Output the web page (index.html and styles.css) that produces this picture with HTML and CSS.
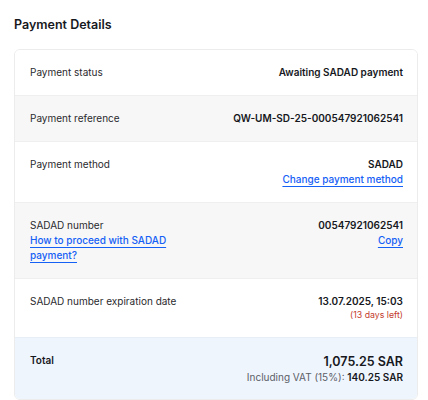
FILE: index.html
```html
<!DOCTYPE html>
<html lang="en">
<head>
<meta charset="utf-8">
<title>Payment Details</title>
<link rel="stylesheet" href="styles.css">
</head>
<body>
<section class="panel">
  <h2 class="title">Payment Details</h2>
  <div class="card">
    <div class="row">
      <div class="label">Payment status</div>
      <div class="value"><span class="strong">Awaiting SADAD payment</span></div>
    </div>
    <div class="row alt">
      <div class="label">Payment reference</div>
      <div class="value"><span class="strong">QW-UM-SD-25-000547921062541</span></div>
    </div>
    <div class="row">
      <div class="label">Payment method</div>
      <div class="value">
        <span class="strong">SADAD</span>
        <a class="link" href="#">Change payment method</a>
      </div>
    </div>
    <div class="row alt">
      <div class="label">
        <span>SADAD number</span>
        <a class="link" href="#">How to proceed with SADAD<br>payment?</a>
      </div>
      <div class="value">
        <span class="strong">00547921062541</span>
        <a class="link" href="#">Copy</a>
      </div>
    </div>
    <div class="row">
      <div class="label">SADAD number expiration date</div>
      <div class="value">
        <span class="strong">13.07.2025, 15:03</span>
        <span class="warn">(13 days left)</span>
      </div>
    </div>
    <div class="row total">
      <div class="label strong">Total</div>
      <div class="value">
        <span class="amount">1,075.25 SAR</span>
        <span class="vat">Including VAT (15%): <b>140.25 SAR</b></span>
      </div>
    </div>
  </div>
</section>
</body>
</html>
```

FILE: styles.css
```css
* { box-sizing: border-box; }
html, body { margin: 0; padding: 0; background: #fff; }
body {
  font-family: Inter, "Noto Sans", sans-serif;
  color: #1c1c1e;
  font-size: 10px;
  line-height: 15px;
}
.panel { padding: 17px 10px 0 14px; }
.title {
  margin: 0 0 17px;
  font-size: 12.5px;
  line-height: 15px;
  font-weight: 600;
  color: #16181d;
}
.card {
  border: 1px solid #ececec;
  border-radius: 6px;
  overflow: hidden;
}
.row {
  display: flex;
  justify-content: space-between;
  align-items: flex-start;
  padding: 15px 14px 15px 15px;
  border-top: 1px solid #efefef;
  background: #fff;
}
.row:first-child { border-top: none; }
.row.alt { background: #f7f7f7; }
.row.total { background: #eff5fd; border-top-color: #e8eef6; }
.label { display: flex; flex-direction: column; align-items: flex-start; color: #2a2a2e; }
.value { display: flex; flex-direction: column; align-items: flex-end; text-align: right; }
.strong { font-weight: 600; color: #16181d; }
.link {
  color: #1560f5;
  text-decoration: underline;
  text-decoration-thickness: 1px;
  text-underline-offset: 3px;
  line-height: 15px;
  font-weight: 500;
}
.warn { color: #c43c2c; font-size: 8.75px; line-height: 13px; }
.amount { font-size: 12.5px; line-height: 17px; font-weight: 600; color: #16181d; }
.vat { margin-top: 1px; color: #5b6068; line-height: 13px; }
.vat b { font-weight: 600; color: #16181d; }
```
